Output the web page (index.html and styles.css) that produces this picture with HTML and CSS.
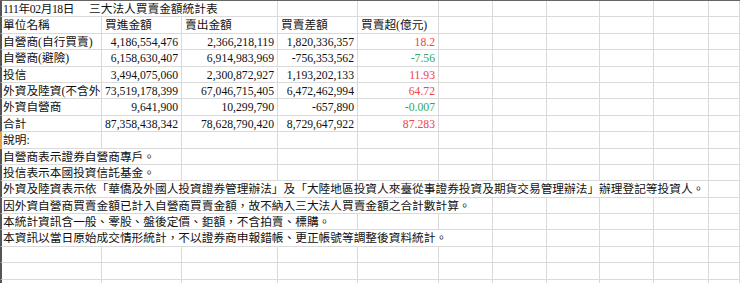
FILE: index.html
```html
<!DOCTYPE html>
<html lang="zh-Hant">
<head>
    <meta charset="UTF-8">
    <title>三大法人買賣金額統計表</title>
    <link rel="stylesheet" href="styles.css">
</head>
<body>
    <div class="sheet">
        <!-- title -->
        <div class="row">
            <div class="c span3"><span class="date">111年02月18日</span> <span class="report">三大法人買賣金額統計表</span></div>
            <div class="c"></div><div class="c"></div><div class="c"></div><div class="c"></div><div class="c"></div><div class="c"></div><div class="c"></div><div class="c"></div>
        </div>

        <!-- header -->
        <div class="row">
            <div class="c">單位名稱</div>
            <div class="c head">買進金額</div>
            <div class="c head">賣出金額</div>
            <div class="c head">買賣差額</div>
            <div class="c head">買賣超(億元)</div>
            <div class="c"></div><div class="c"></div><div class="c"></div><div class="c"></div><div class="c"></div><div class="c"></div>
        </div>

        <!-- data -->
        <div class="row">
            <div class="c">自營商(自行買賣)</div>
            <div class="c num">4,186,554,476</div>
            <div class="c num">2,366,218,119</div>
            <div class="c num">1,820,336,357</div>
            <div class="c num up">18.2</div>
            <div class="c"></div><div class="c"></div><div class="c"></div><div class="c"></div><div class="c"></div><div class="c"></div>
        </div>
        <div class="row">
            <div class="c">自營商(避險)</div>
            <div class="c num">6,158,630,407</div>
            <div class="c num">6,914,983,969</div>
            <div class="c num">-756,353,562</div>
            <div class="c num down">-7.56</div>
            <div class="c"></div><div class="c"></div><div class="c"></div><div class="c"></div><div class="c"></div><div class="c"></div>
        </div>
        <div class="row">
            <div class="c">投信</div>
            <div class="c num">3,494,075,060</div>
            <div class="c num">2,300,872,927</div>
            <div class="c num">1,193,202,133</div>
            <div class="c num up">11.93</div>
            <div class="c"></div><div class="c"></div><div class="c"></div><div class="c"></div><div class="c"></div><div class="c"></div>
        </div>
        <div class="row">
            <div class="c">外資及陸資(不含外資自營商)</div>
            <div class="c num">73,519,178,399</div>
            <div class="c num">67,046,715,405</div>
            <div class="c num">6,472,462,994</div>
            <div class="c num up">64.72</div>
            <div class="c"></div><div class="c"></div><div class="c"></div><div class="c"></div><div class="c"></div><div class="c"></div>
        </div>
        <div class="row">
            <div class="c">外資自營商</div>
            <div class="c num">9,641,900</div>
            <div class="c num">10,299,790</div>
            <div class="c num">-657,890</div>
            <div class="c num down">-0.007</div>
            <div class="c"></div><div class="c"></div><div class="c"></div><div class="c"></div><div class="c"></div><div class="c"></div>
        </div>
        <div class="row">
            <div class="c">合計</div>
            <div class="c num">87,358,438,342</div>
            <div class="c num">78,628,790,420</div>
            <div class="c num">8,729,647,922</div>
            <div class="c num up">87.283</div>
            <div class="c"></div><div class="c"></div><div class="c"></div><div class="c"></div><div class="c"></div><div class="c"></div>
        </div>

        <!-- notes -->
        <div class="row">
            <div class="c mark">說明:</div>
            <div class="c"></div><div class="c"></div><div class="c"></div><div class="c"></div><div class="c"></div><div class="c"></div><div class="c"></div><div class="c"></div><div class="c"></div><div class="c"></div>
        </div>
        <div class="row">
            <div class="c span2">自營商表示證券自營商專戶。</div>
            <div class="c"></div><div class="c"></div><div class="c"></div><div class="c"></div><div class="c"></div><div class="c"></div><div class="c"></div><div class="c"></div><div class="c"></div>
        </div>
        <div class="row">
            <div class="c span2">投信表示本國投資信託基金。</div>
            <div class="c"></div><div class="c"></div><div class="c"></div><div class="c"></div><div class="c"></div><div class="c"></div><div class="c"></div><div class="c"></div><div class="c"></div>
        </div>
        <div class="row">
            <div class="c span10">外資及陸資表示依「華僑及外國人投資證券管理辦法」及「大陸地區投資人來臺從事證券投資及期貨交易管理辦法」辦理登記等投資人。</div>
            <div class="c"></div>
        </div>
        <div class="row">
            <div class="c span6">因外資自營商買賣金額已計入自營商買賣金額，故不納入三大法人買賣金額之合計數計算。</div>
            <div class="c"></div><div class="c"></div><div class="c"></div><div class="c"></div><div class="c"></div>
        </div>
        <div class="row">
            <div class="c span4">本統計資訊含一般、零股、盤後定價、鉅額，不含拍賣、標購。</div>
            <div class="c"></div><div class="c"></div><div class="c"></div><div class="c"></div><div class="c"></div><div class="c"></div><div class="c"></div>
        </div>
        <div class="row">
            <div class="c span6">本資訊以當日原始成交情形統計，不以證券商申報錯帳、更正帳號等調整後資料統計。</div>
            <div class="c"></div><div class="c"></div><div class="c"></div><div class="c"></div><div class="c"></div>
        </div>

        <!-- empty rows -->
        <div class="row">
            <div class="c"></div><div class="c"></div><div class="c"></div><div class="c"></div><div class="c"></div><div class="c"></div><div class="c"></div><div class="c"></div><div class="c"></div><div class="c"></div><div class="c"></div>
        </div>
        <div class="row">
            <div class="c"></div><div class="c"></div><div class="c"></div><div class="c"></div><div class="c"></div><div class="c"></div><div class="c"></div><div class="c"></div><div class="c"></div><div class="c"></div><div class="c"></div>
        </div>
        <div class="row">
            <div class="c"></div><div class="c"></div><div class="c"></div><div class="c"></div><div class="c"></div><div class="c"></div><div class="c"></div><div class="c"></div><div class="c"></div><div class="c"></div><div class="c"></div>
        </div>
    </div>
</body>
</html>
```

FILE: styles.css
```css
body {
    margin: 0;
    background-color: #fff;
    font-family: "Liberation Serif", "Noto Sans CJK TC", serif;
    font-size: 11.7px;
    color: #111;
    overflow: hidden;
}

.sheet {
    border-top: 1px solid #666;
}

.row {
    display: grid;
    grid-template-columns: 102px 80px 96px 80px 81px 54px 54px 53px 54px 55px 1fr;
    height: 16.4px;
}

.c {
    box-sizing: border-box;
    border-right: 1px solid #dadada;
    border-bottom: 1px solid #dadada;
    padding: 3px 2px 0 1px;
    line-height: 12.4px;
    white-space: nowrap;
    overflow: hidden;
}

.c:first-child {
    border-left: 2px solid #555;
}

.c.mark {
    border-left-color: #e6a24a;
}

.head {
    padding-left: 3px;
}

.num {
    text-align: right;
    padding-right: 3px;
}

.up {
    color: #ee4444;
}

.down {
    color: #2fa862;
}

.date {
    letter-spacing: -0.4px;
}

.report {
    margin-left: 12px;
}

.span2 { grid-column: span 2; }
.span3 { grid-column: span 3; }
.span4 { grid-column: span 4; }
.span6 { grid-column: span 6; }
.span10 { grid-column: span 10; }
```
